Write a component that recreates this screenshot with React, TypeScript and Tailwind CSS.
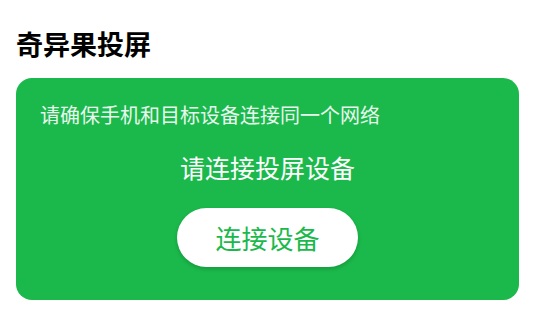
export default function App() {
  return (
    <div
      className="min-h-screen bg-white pl-4 pr-5"
      style={{ fontFamily: '"Noto Sans CJK SC", "Noto Sans", sans-serif' }}
    >
      <h1 className="pt-[26px] text-[27px] font-bold leading-[36px] text-black">
        奇异果投屏
      </h1>

      <div className="mt-4 rounded-[16px] bg-[#1bb94b] px-6 pt-[23px] pb-[33px]">
        <p className="text-[20px] leading-[28px] text-[#e9f8ee]">
          请确保手机和目标设备连接同一个网络
        </p>
        <p className="mt-[21px] text-center text-[25px] leading-[34px] text-white">
          请连接投屏设备
        </p>
        <div className="mt-6 flex justify-center">
          <button className="flex h-[59px] w-[181px] items-center justify-center rounded-full bg-white text-[26px] text-[#1bb94b] shadow-[0_2px_4px_rgba(0,0,0,0.18)]">
            连接设备
          </button>
        </div>
      </div>
    </div>
  );
}
